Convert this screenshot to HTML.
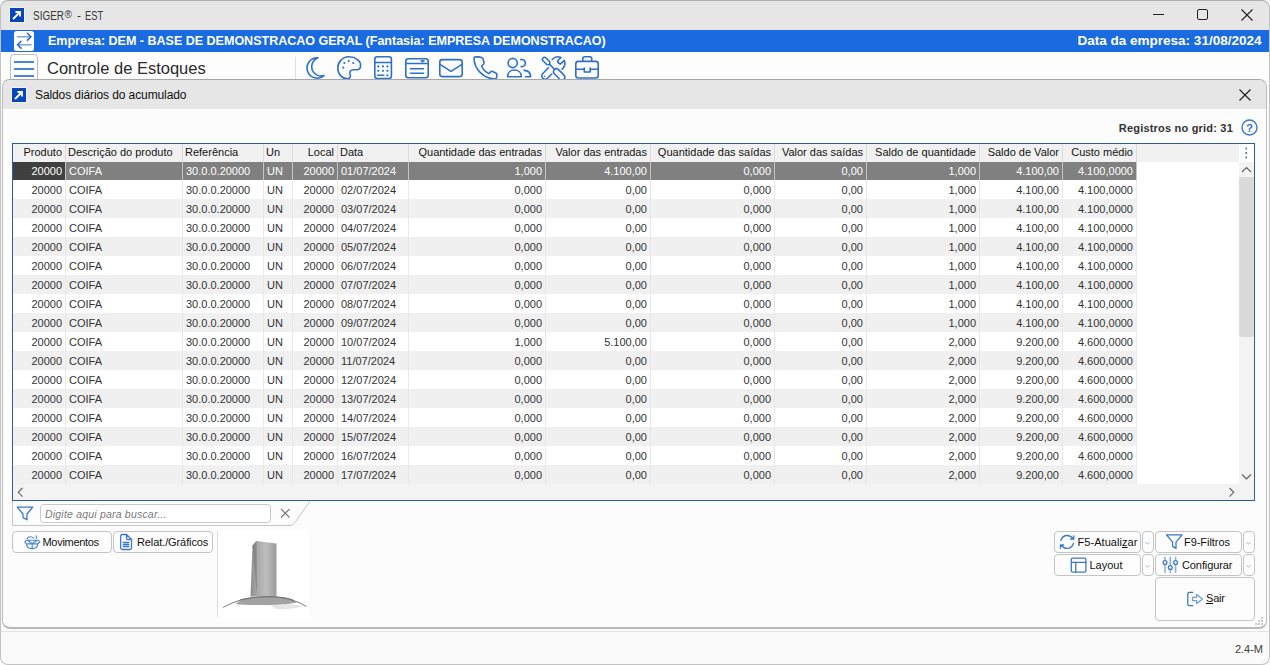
<!DOCTYPE html>
<html><head><meta charset="utf-8">
<style>
*{box-sizing:border-box;margin:0;padding:0}
html,body{width:1270px;height:665px;overflow:hidden;background:#fafafa;font-family:"Liberation Sans",sans-serif;color:#1a1a1a}
.a{position:absolute}
#win{position:absolute;left:0;top:0;width:1270px;height:665px;border-radius:8px;background:#fbfbfb;overflow:hidden}
#frame{position:absolute;left:0;top:0;width:1270px;height:665px;border:1px solid #c2c2c2;border-top-color:#b0b0b0;border-radius:8px;z-index:50}
#title{position:absolute;left:0;top:0;width:1270px;height:30px;background:#e6e6e6}
#band{position:absolute;left:1px;top:30px;width:1268px;height:22px;background:#1a6be0;color:#fff;font-weight:bold;font-size:12px}
#tool{position:absolute;left:1px;top:52px;width:1268px;height:27px;background:#fdfdfd}
#mdi{position:absolute;left:2px;top:79px;width:1265px;height:550px;border:1px solid #bdbdbd;border-top-color:#a6a6a6;border-bottom:2px solid #b8b8b8;border-radius:8px;background:#fcfcfc;overflow:hidden}
#mdititle{position:absolute;left:0;top:0;width:100%;height:29px;background:#e6e6e6}
#status{position:absolute;left:1px;top:631px;width:1268px;height:34px;border-top:1px solid #e4e4e4;background:#fafafa}
.ico{stroke:#2f6fcc;fill:none;stroke-width:1.6;stroke-linecap:round;stroke-linejoin:round}
#grid{position:absolute;left:9px;top:63px;width:1243px;height:358px;border:1px solid #2c5b9e;background:#fff;overflow:hidden;font-size:11px}
.hdr{position:absolute;left:0;top:0;width:1226px;height:18px;background:#f1f1f1;line-height:17px;color:#111}
.row{position:absolute;left:0;width:1124px;background:#fff;color:#333}
.row.alt .c{background:#f0f0f0}
.c{position:absolute;top:0;height:100%;white-space:nowrap;overflow:hidden;border-right:1px solid #e8e8e8}
.hdr .c{border-right:1px solid #dcdcdc}
.c.r{text-align:right;padding-right:3px}
.c.l{text-align:left;padding-left:2px}
.row .c.l{padding-left:3px}
.row.sel .c{background:#808080;color:#fff;border-right-color:#c4c4c4}
.row.p1 .c{padding-top:1px}
.row.sel .c.first{background:#404040}
.btn{position:absolute;border:1px solid #c4c4c4;border-radius:4px;background:#fdfdfd;font-size:12px;color:#1a1a1a}
</style></head><body>
<div id="win">
  <div id="title">
    <svg class="a" style="left:9px;top:7px" width="16" height="16" viewBox="0 0 16 16">
      <rect x="0.5" y="0.5" width="15" height="15" fill="#fff"/>
      <rect x="1" y="1" width="14" height="14" fill="#0b46b8"/>
      <path d="M4 12 L11 5 M6.5 5 H11 V9.5" stroke="#fff" stroke-width="1.8" fill="none"/>
    </svg>
    <div class="a" style="left:33px;top:8px;font-size:12px;line-height:16px;color:#3a3a3a;white-space:nowrap">
      <span class="a" style="left:0;top:0;transform:scaleX(0.83);transform-origin:0 0">SIGER</span>
      <span class="a" style="left:31.5px;top:-1px;font-size:10px">®</span>
      <span class="a" style="left:44px;top:0">-</span>
      <span class="a" style="left:52px;top:0;transform:scaleX(0.78);transform-origin:0 0">EST</span></div>
    <div class="a" style="left:1153px;top:14px;width:11px;height:1px;background:#222"></div>
    <div class="a" style="left:1197px;top:9px;width:11px;height:11px;border:1px solid #222;border-radius:2px"></div>
    <svg class="a" style="left:1241px;top:9px" width="12" height="12" viewBox="0 0 12 12"><path d="M0.5 0.5 L11.5 11.5 M11.5 0.5 L0.5 11.5" stroke="#222" stroke-width="1.1"/></svg>
  </div>
  <div id="band">
    <svg class="a" style="left:12px;top:1px" width="22" height="21" viewBox="0 0 22 21">
      <rect x="1" y="0" width="20" height="20" rx="2.5" fill="#fff"/><g transform="translate(0.5,-0.3)">
      <path d="M4 6 H17 M4 14 H17.5" stroke="#7da6e3" stroke-width="1.6" fill="none" stroke-linecap="round"/>
      <path d="M14 2.6 L17.4 6 L14 9.4 M7.5 10.6 L4.1 14 L7.5 17.4" stroke="#2f68c8" stroke-width="1.6" fill="none" stroke-linecap="round" stroke-linejoin="round"/></g>
    </svg>
    <div class="a" style="left:46.5px;top:0;line-height:22px;white-space:nowrap;transform:scaleX(1.043);transform-origin:0 0">Empresa: DEM - BASE DE DEMONSTRACAO GERAL (Fantasia: EMPRESA DEMONSTRACAO)</div>
    <div class="a" style="right:8px;top:0;line-height:22px;white-space:nowrap;transform:scaleX(1.125);transform-origin:100% 0">Data da empresa: 31/08/2024</div>
  </div>
  <div id="tool">
    <div class="a" style="left:9px;top:2px;width:28px;height:30px;border:1px solid #bcbcbc;border-radius:4px;background:#fff"></div>
    <div class="a" style="left:13px;top:9px;width:20px;height:2px;background:#4a86d8"></div>
    <div class="a" style="left:13px;top:16px;width:20px;height:2px;background:#4a86d8"></div>
    <div class="a" style="left:13px;top:23px;width:20px;height:2px;background:#4a86d8"></div>
    <div class="a" style="left:46px;top:5px;font-size:16.5px;line-height:22px;color:#2a2a2a;white-space:nowrap">Controle de Estoques</div>
    <div class="a" style="left:294px;top:5px;width:1px;height:23px;background:#e0e0e0"></div>
    <svg class="a" style="left:-1px;top:-52px;overflow:visible" width="1270" height="80" viewBox="0 0 1270 80">
<g class="ico">
<path d="M318 57.8 A10.2 10.2 0 1 0 324 75.6 A8.6 8.6 0 0 1 318 57.8 Z"/>
<path d="M349 56.8 C342 56.8 337.8 62.5 337.8 68 C337.8 74.5 342.5 78.8 347.5 78.8 C350.5 78.8 350.8 76 350 74 C349.2 71.8 350.8 69.8 353.5 69.8 L356.5 69.8 C359 69.8 360.6 68 360.6 65.5 C360.6 60.5 355.5 56.8 349 56.8 Z"/>
<rect x="374.8" y="56.8" width="16.6" height="21.8" rx="2.5"/>
<path d="M375 62.5 H391.2 M377.6 75.3 H383.8"/>
<rect x="405.8" y="58.8" width="22.4" height="19" rx="2.5"/>
<path d="M406 63.5 H428 M410.5 68.8 H423.5 M410.5 73.3 H423.5 M421.3 60.6 L422.6 61.6 L423.9 60.6"/>
<rect x="439.8" y="59.6" width="22.4" height="17" rx="2.5"/>
<path d="M440 64.3 L451 71.3 L462 64.3"/>
<path d="M478.6 56.9 L481.5 57.5 C482.3 57.7 482.8 58.3 483 59 L484 62.5 C484.2 63.3 483.9 64 483.3 64.5 L481.6 66 C483 69.5 485.5 72 488.8 73.6 L490.5 72 C491.1 71.4 491.9 71.3 492.6 71.6 L495.8 72.9 C496.5 73.2 497 73.9 496.9 74.7 L496.6 77.4 C496.5 78.3 495.7 79 494.8 79 C483.5 78.5 474.5 69.5 474 58.5 C474 57.5 474.8 56.8 475.8 56.8 Z"/>
<circle cx="512.7" cy="63" r="4.6"/>
<path d="M520.8 59.6 A3.6 3.6 0 1 1 521.2 66.6"/>
<path d="M507.6 76.7 C507.6 72.5 510.5 70 514.4 70 C518.3 70 521.4 72.5 521.4 76.7 Z"/>
<path d="M524 70.4 C528 70.6 530.6 72.8 530.6 76.7 H525.5"/>
<path d="M542.8 58.2 C543.8 57 545 57 546 58 L549.6 61.5 L550 64.8 L546.8 64.5 L543 60.8 C542 59.8 542 59 542.8 58.2 Z"/>
<path d="M550 64.8 L553.8 68.6"/>
<path d="M548.5 67.8 L542.8 73.5 C541.5 74.8 541.5 77 542.8 78.3 C544.1 79.6 546.2 79.6 547.5 78.3 L551.8 74"/>
<path d="M552.2 59.5 C554.5 57 558 56.2 561 57.5 L557.6 60.8 C557.8 62.5 559 63.7 560.7 63.9 L564.2 60.4 C565.5 63.5 564.5 67 562 69.2"/>
<path d="M554.3 69.6 C555.5 68.4 557.3 68.4 558.5 69.6 L564 75.1 C565.2 76.3 565.2 78.1 564 79.3 C562.8 80.5 561 80.5 559.8 79.3 L554.3 73.8 C553.1 72.6 553.1 70.8 554.3 69.6 Z"/>
<rect x="575.8" y="61.4" width="22.4" height="16.6" rx="2.5"/>
<path d="M582.8 61.2 V58.5 C582.8 57.4 583.4 56.8 584.5 56.8 H590 C591.1 56.8 591.7 57.4 591.7 58.5 V61.2 M576 69.2 H584.3 M590.2 69.2 H598 M584.3 68 V72 H590.2 V68"/>
</g>
<g fill="#2f6fcc">
<circle cx="343.3" cy="67.6" r="1.1"/><circle cx="344.4" cy="63" r="1.1"/><circle cx="348.7" cy="61" r="1.1"/><circle cx="353.3" cy="63" r="1.1"/>
<circle cx="378.3" cy="66.4" r="1.1"/><circle cx="382.9" cy="66.4" r="1.1"/><circle cx="387.4" cy="66.4" r="1.1"/>
<circle cx="378.3" cy="70.8" r="1.1"/><circle cx="382.9" cy="70.8" r="1.1"/><circle cx="387.4" cy="70.8" r="1.1"/>
<circle cx="387.4" cy="75.3" r="1.1"/>
<circle cx="544.8" cy="76.2" r="0.7"/>
</g>
</svg>
  </div>
  <div id="mdi">
    <div id="mdititle">
      <svg class="a" style="left:8px;top:6.5px" width="16" height="16" viewBox="0 0 16 16">
        <rect x="0.5" y="0.5" width="15" height="15" fill="#fff"/>
        <rect x="1" y="1" width="14" height="14" fill="#0b46b8"/>
        <path d="M4 12 L11 5 M6.5 5 H11 V9.5" stroke="#fff" stroke-width="1.8" fill="none"/>
      </svg>
      <div class="a" style="left:32px;top:7px;font-size:12px;line-height:17px;color:#111;white-space:nowrap;letter-spacing:-0.1px">Saldos diários do acumulado</div>
      <svg class="a" style="left:1236px;top:9px" width="12" height="12" viewBox="0 0 12 12"><path d="M0.5 0.5 L11.5 11.5 M11.5 0.5 L0.5 11.5" stroke="#222" stroke-width="1.2"/></svg>
    </div>
    <div class="a" style="right:33px;top:40px;font-size:11px;font-weight:bold;line-height:16px;color:#333;letter-spacing:0.2px;white-space:nowrap">Registros no grid: 31</div>
    <svg class="a" style="left:1238px;top:39px" width="17" height="17" viewBox="0 0 17 17"><circle cx="8.5" cy="8.5" r="7.5" stroke="#3a78c9" stroke-width="1.4" fill="none"/><text x="8.5" y="12.8" text-anchor="middle" font-family="Liberation Sans" font-weight="bold" font-size="11.5" fill="#3a78c9">?</text></svg>

    <!-- search panel -->
    <svg class="a" style="left:-3px;top:-80px;overflow:visible" width="1270" height="665" viewBox="0 0 1270 665">
      <path d="M12.5 500 V525.5 H290 Q293 525.5 295 522.5 L310.5 500.5" fill="none" stroke="#c4c4c4" stroke-width="1"/>
      <path d="M17.3 507.2 H32.7 L27 514 V519.8 L23 517.6 V514 Z" fill="none" stroke="#3a78c9" stroke-width="1.3" stroke-linejoin="round"/>
      <rect x="40.5" y="504.5" width="230" height="18" rx="3" fill="#fff" stroke="#c8c8c8"/>
      <path d="M281 509 L289.5 517.5 M289.5 509 L281 517.5" stroke="#7a7a7a" stroke-width="1.1"/>
      <line x1="217.5" y1="531" x2="217.5" y2="617" stroke="#dcdcdc"/>
    </svg>
    <div class="a" style="left:42px;top:425.5px;font-size:10.5px;line-height:16px;font-style:italic;color:#7a7a7a;white-space:nowrap;letter-spacing:0.2px">Digite aqui para buscar...</div>
    <!-- left buttons -->
    <div class="btn" style="left:9px;top:451px;width:100px;height:22px"></div>
    <div class="btn" style="left:110px;top:451px;width:100px;height:22px"></div>
    <div class="a" style="left:39.5px;top:455px;font-size:11px;line-height:14px;color:#111;letter-spacing:-0.3px;white-space:nowrap">Movimentos</div>
    <div class="a" style="left:134px;top:455px;font-size:11px;line-height:14px;color:#111;letter-spacing:-0.1px;white-space:nowrap">Relat./Gráficos</div>
    <!-- right buttons -->
    <div class="btn" style="left:1051px;top:451px;width:87px;height:22px"></div>
    <div class="btn" style="left:1139px;top:451px;width:12px;height:22px"></div>
    <div class="btn" style="left:1051px;top:474px;width:87px;height:22px"></div>
    <div class="btn" style="left:1139px;top:474px;width:12px;height:22px"></div>
    <div class="btn" style="left:1152px;top:451px;width:87px;height:22px"></div>
    <div class="btn" style="left:1240px;top:451px;width:12px;height:22px"></div>
    <div class="btn" style="left:1152px;top:474px;width:87px;height:22px"></div>
    <div class="btn" style="left:1240px;top:474px;width:12px;height:22px"></div>
    <div class="btn" style="left:1152px;top:497px;width:100px;height:44px"></div>
    <div class="a" style="left:1074.5px;top:455px;font-size:11px;line-height:14px;color:#111;white-space:nowrap;letter-spacing:0.05px">F5-Atuali<u>z</u>ar</div>
    <div class="a" style="left:1086.5px;top:478px;font-size:11px;line-height:14px;color:#111;white-space:nowrap">Layout</div>
    <div class="a" style="left:1181px;top:455px;font-size:11px;line-height:14px;color:#111;white-space:nowrap;letter-spacing:-0.05px">F9-Filtros</div>
    <div class="a" style="left:1179px;top:478px;font-size:11px;line-height:14px;color:#111;white-space:nowrap;letter-spacing:-0.1px">Configurar</div>
    <div class="a" style="left:1203px;top:511px;font-size:11px;line-height:14px;color:#111;white-space:nowrap;letter-spacing:-0.2px"><u>S</u>air</div>
    <svg class="a" style="left:-3px;top:-80px;overflow:visible" width="1270" height="665" viewBox="0 0 1270 665">
      <g fill="none" stroke="#3a78c9" stroke-width="1.3" stroke-linecap="round" stroke-linejoin="round">
        <!-- movimentos box -->
        <path stroke="#4a86d8" stroke-width="1.15" d="M24.8 542 L26.5 540.2 H38 L39.8 542 L38 543.8 H26.5 Z M27.5 540.2 L32.2 543.8 L37 540.2 M26.5 543.8 C26.5 547 29 548.6 32.2 548.6 C35.4 548.6 37.8 547 37.8 543.8 M32.2 543.8 V548.6 M27 538.6 C28.5 536.4 31.5 536.1 33.5 538.1 M36.3 535.9 V538.2"/>
        <!-- document -->
        <path d="M120.7 536 C120.7 535 121.3 534.5 122.3 534.5 H126.5 L131.5 539.5 V548 C131.5 549 130.9 549.5 129.9 549.5 H122.3 C121.3 549.5 120.7 549 120.7 548 Z M126.5 534.5 V538.2 C126.5 539 127 539.5 127.8 539.5 H131.5 M123.4 542.5 H128.8 M123.4 544.5 H128.8 M123.4 546.5 H128.8"/>
        <!-- refresh -->
        <path d="M1060.8 540.5 C1062 537.2 1064.5 535.5 1067 535.5 C1069.6 535.5 1071.8 536.8 1073.5 538.8 M1073.8 535.8 V539 H1070.6 M1073.6 543.3 C1072.4 546.6 1070 548.4 1067.2 548.4 C1064.6 548.4 1062.4 547 1060.8 545 M1060.4 548.2 V545 H1063.6"/>
        <!-- layout -->
        <rect x="1071.3" y="558.2" width="14.6" height="14" rx="1.6"/>
        <path d="M1071.5 562.3 H1085.8 M1075.8 562.3 V572"/>
        <!-- filter -->
        <path d="M1166.5 534.8 H1182 L1176 542.2 V548.4 L1172.6 546.4 V542.2 Z"/>
        <!-- configurar sliders -->
        <path d="M1165 557.3 V572.3 M1170.3 557.3 V572.3 M1175.6 557.3 V572.3" stroke="#8fb0df" stroke-width="1.6"/>
        <circle cx="1165" cy="562.5" r="1.9" fill="#fff"/>
        <circle cx="1170.3" cy="567.5" r="1.9" fill="#fff"/>
        <circle cx="1175.6" cy="562.5" r="1.9" fill="#fff"/>
        <!-- sair -->
        <path d="M1192.8 592.3 H1189.2 C1188.4 592.3 1187.8 592.9 1187.8 593.7 V604.3 C1187.8 605.1 1188.4 605.7 1189.2 605.7 H1192.8"/>
        <path d="M1192.5 597.3 H1196.6 V594.4 L1202.5 599 L1196.6 603.6 V600.7 H1192.5 Z" stroke="#6f9be0"/>
      </g>
      <g fill="none" stroke="#9fb4d4" stroke-width="1">
        <path d="M1145.5 542.5 L1147.5 544 L1149.5 542.5 M1145.5 565.5 L1147.5 567 L1149.5 565.5 M1246.5 542.5 L1248.5 544 L1250.5 542.5 M1246.5 565.5 L1248.5 567 L1250.5 565.5"/>
      </g>
      <g fill="#c8c8c8">
        <rect x="1261" y="617" width="2" height="2"/><rect x="1258" y="620" width="2" height="2"/><rect x="1261" y="620" width="2" height="2"/>
        <rect x="1255" y="623" width="2" height="2"/><rect x="1258" y="623" width="2" height="2"/><rect x="1261" y="623" width="2" height="2"/>
      </g>
    </svg>
    <!-- coifa image -->
    <svg class="a" style="left:215px;top:450px" width="91" height="89" viewBox="218 530 91 89">
      <rect x="218" y="530" width="91" height="89" fill="#fff"/>
      <defs>
        <linearGradient id="ch" x1="0" x2="1" y1="0" y2="0"><stop offset="0" stop-color="#8c8c8c"/><stop offset="0.25" stop-color="#a8a8a8"/><stop offset="0.6" stop-color="#bdbdbd"/><stop offset="1" stop-color="#9a9a9a"/></linearGradient>
      </defs>
      <path d="M250.5 596.5 L252.5 545.5 L256.5 541 L276.5 543.5 L276.5 596.5 Z" fill="url(#ch)"/>
      <path d="M252.5 545.5 L256.5 541 L257 596" fill="#7d7d7d" opacity="0.7"/>
      <path d="M270 605 C282 604 295 604 304 606 C296 609 282 609.5 276 609 Z" fill="#e6e6e6"/>
      <path d="M235.5 604 C240 599.5 250 597.3 263 596.8 C280 596.5 292 598.8 296.5 602.5 C290 605 250 606 235.5 604 Z" fill="#a2a2a2"/>
      <path d="M240 600 C250 597.5 262 596.8 270 596.8 C282 596.8 290 598.5 294 600.5" fill="none" stroke="#7c7c7c" stroke-width="1"/>
      <path d="M223 607.5 C236 600 250 597 265 596.6 C282 596.4 296 600 306.5 606.5" fill="none" stroke="#6e6e6e" stroke-width="0.9"/>
    </svg>
    <div id="grid">
<div class="hdr">
<div class="c h r" style="left:0px;width:53px">Produto</div>
<div class="c h l" style="left:53px;width:117px">Descrição do produto</div>
<div class="c h l" style="left:170px;width:81px">Referência</div>
<div class="c h l" style="left:251px;width:29px">Un</div>
<div class="c h r" style="left:280px;width:45px">Local</div>
<div class="c h l" style="left:325px;width:71px">Data</div>
<div class="c h r" style="left:396px;width:137px">Quantidade das entradas</div>
<div class="c h r" style="left:533px;width:105px">Valor das entradas</div>
<div class="c h r" style="left:638px;width:124px">Quantidade das saídas</div>
<div class="c h r" style="left:762px;width:92px">Valor das saídas</div>
<div class="c h r" style="left:854px;width:113px">Saldo de quantidade</div>
<div class="c h r" style="left:967px;width:83px">Saldo de Valor</div>
<div class="c h r" style="left:1050px;width:74px">Custo médio</div>
</div>
<div class="row sel" style="top:18px;height:18px;line-height:18px">
<div class="c first r" style="left:0px;width:53px">20000</div>
<div class="c  l" style="left:53px;width:117px">COIFA</div>
<div class="c  l" style="left:170px;width:81px">30.0.0.20000</div>
<div class="c  l" style="left:251px;width:29px">UN</div>
<div class="c  r" style="left:280px;width:45px">20000</div>
<div class="c  l" style="left:325px;width:71px">01/07/2024</div>
<div class="c  r" style="left:396px;width:137px">1,000</div>
<div class="c  r" style="left:533px;width:105px">4.100,00</div>
<div class="c  r" style="left:638px;width:124px">0,000</div>
<div class="c  r" style="left:762px;width:92px">0,00</div>
<div class="c  r" style="left:854px;width:113px">1,000</div>
<div class="c  r" style="left:967px;width:83px">4.100,00</div>
<div class="c  r" style="left:1050px;width:74px">4.100,0000</div>
</div>
<div class="row p1" style="top:36px;height:19px;line-height:19px">
<div class="c first r" style="left:0px;width:53px">20000</div>
<div class="c  l" style="left:53px;width:117px">COIFA</div>
<div class="c  l" style="left:170px;width:81px">30.0.0.20000</div>
<div class="c  l" style="left:251px;width:29px">UN</div>
<div class="c  r" style="left:280px;width:45px">20000</div>
<div class="c  l" style="left:325px;width:71px">02/07/2024</div>
<div class="c  r" style="left:396px;width:137px">0,000</div>
<div class="c  r" style="left:533px;width:105px">0,00</div>
<div class="c  r" style="left:638px;width:124px">0,000</div>
<div class="c  r" style="left:762px;width:92px">0,00</div>
<div class="c  r" style="left:854px;width:113px">1,000</div>
<div class="c  r" style="left:967px;width:83px">4.100,00</div>
<div class="c  r" style="left:1050px;width:74px">4.100,0000</div>
</div>
<div class="row p1 alt" style="top:55px;height:19px;line-height:19px">
<div class="c first r" style="left:0px;width:53px">20000</div>
<div class="c  l" style="left:53px;width:117px">COIFA</div>
<div class="c  l" style="left:170px;width:81px">30.0.0.20000</div>
<div class="c  l" style="left:251px;width:29px">UN</div>
<div class="c  r" style="left:280px;width:45px">20000</div>
<div class="c  l" style="left:325px;width:71px">03/07/2024</div>
<div class="c  r" style="left:396px;width:137px">0,000</div>
<div class="c  r" style="left:533px;width:105px">0,00</div>
<div class="c  r" style="left:638px;width:124px">0,000</div>
<div class="c  r" style="left:762px;width:92px">0,00</div>
<div class="c  r" style="left:854px;width:113px">1,000</div>
<div class="c  r" style="left:967px;width:83px">4.100,00</div>
<div class="c  r" style="left:1050px;width:74px">4.100,0000</div>
</div>
<div class="row p1" style="top:74px;height:19px;line-height:19px">
<div class="c first r" style="left:0px;width:53px">20000</div>
<div class="c  l" style="left:53px;width:117px">COIFA</div>
<div class="c  l" style="left:170px;width:81px">30.0.0.20000</div>
<div class="c  l" style="left:251px;width:29px">UN</div>
<div class="c  r" style="left:280px;width:45px">20000</div>
<div class="c  l" style="left:325px;width:71px">04/07/2024</div>
<div class="c  r" style="left:396px;width:137px">0,000</div>
<div class="c  r" style="left:533px;width:105px">0,00</div>
<div class="c  r" style="left:638px;width:124px">0,000</div>
<div class="c  r" style="left:762px;width:92px">0,00</div>
<div class="c  r" style="left:854px;width:113px">1,000</div>
<div class="c  r" style="left:967px;width:83px">4.100,00</div>
<div class="c  r" style="left:1050px;width:74px">4.100,0000</div>
</div>
<div class="row p1 alt" style="top:93px;height:19px;line-height:19px">
<div class="c first r" style="left:0px;width:53px">20000</div>
<div class="c  l" style="left:53px;width:117px">COIFA</div>
<div class="c  l" style="left:170px;width:81px">30.0.0.20000</div>
<div class="c  l" style="left:251px;width:29px">UN</div>
<div class="c  r" style="left:280px;width:45px">20000</div>
<div class="c  l" style="left:325px;width:71px">05/07/2024</div>
<div class="c  r" style="left:396px;width:137px">0,000</div>
<div class="c  r" style="left:533px;width:105px">0,00</div>
<div class="c  r" style="left:638px;width:124px">0,000</div>
<div class="c  r" style="left:762px;width:92px">0,00</div>
<div class="c  r" style="left:854px;width:113px">1,000</div>
<div class="c  r" style="left:967px;width:83px">4.100,00</div>
<div class="c  r" style="left:1050px;width:74px">4.100,0000</div>
</div>
<div class="row p1" style="top:112px;height:19px;line-height:19px">
<div class="c first r" style="left:0px;width:53px">20000</div>
<div class="c  l" style="left:53px;width:117px">COIFA</div>
<div class="c  l" style="left:170px;width:81px">30.0.0.20000</div>
<div class="c  l" style="left:251px;width:29px">UN</div>
<div class="c  r" style="left:280px;width:45px">20000</div>
<div class="c  l" style="left:325px;width:71px">06/07/2024</div>
<div class="c  r" style="left:396px;width:137px">0,000</div>
<div class="c  r" style="left:533px;width:105px">0,00</div>
<div class="c  r" style="left:638px;width:124px">0,000</div>
<div class="c  r" style="left:762px;width:92px">0,00</div>
<div class="c  r" style="left:854px;width:113px">1,000</div>
<div class="c  r" style="left:967px;width:83px">4.100,00</div>
<div class="c  r" style="left:1050px;width:74px">4.100,0000</div>
</div>
<div class="row p1 alt" style="top:131px;height:19px;line-height:19px">
<div class="c first r" style="left:0px;width:53px">20000</div>
<div class="c  l" style="left:53px;width:117px">COIFA</div>
<div class="c  l" style="left:170px;width:81px">30.0.0.20000</div>
<div class="c  l" style="left:251px;width:29px">UN</div>
<div class="c  r" style="left:280px;width:45px">20000</div>
<div class="c  l" style="left:325px;width:71px">07/07/2024</div>
<div class="c  r" style="left:396px;width:137px">0,000</div>
<div class="c  r" style="left:533px;width:105px">0,00</div>
<div class="c  r" style="left:638px;width:124px">0,000</div>
<div class="c  r" style="left:762px;width:92px">0,00</div>
<div class="c  r" style="left:854px;width:113px">1,000</div>
<div class="c  r" style="left:967px;width:83px">4.100,00</div>
<div class="c  r" style="left:1050px;width:74px">4.100,0000</div>
</div>
<div class="row p1" style="top:150px;height:19px;line-height:19px">
<div class="c first r" style="left:0px;width:53px">20000</div>
<div class="c  l" style="left:53px;width:117px">COIFA</div>
<div class="c  l" style="left:170px;width:81px">30.0.0.20000</div>
<div class="c  l" style="left:251px;width:29px">UN</div>
<div class="c  r" style="left:280px;width:45px">20000</div>
<div class="c  l" style="left:325px;width:71px">08/07/2024</div>
<div class="c  r" style="left:396px;width:137px">0,000</div>
<div class="c  r" style="left:533px;width:105px">0,00</div>
<div class="c  r" style="left:638px;width:124px">0,000</div>
<div class="c  r" style="left:762px;width:92px">0,00</div>
<div class="c  r" style="left:854px;width:113px">1,000</div>
<div class="c  r" style="left:967px;width:83px">4.100,00</div>
<div class="c  r" style="left:1050px;width:74px">4.100,0000</div>
</div>
<div class="row p1 alt" style="top:169px;height:19px;line-height:19px">
<div class="c first r" style="left:0px;width:53px">20000</div>
<div class="c  l" style="left:53px;width:117px">COIFA</div>
<div class="c  l" style="left:170px;width:81px">30.0.0.20000</div>
<div class="c  l" style="left:251px;width:29px">UN</div>
<div class="c  r" style="left:280px;width:45px">20000</div>
<div class="c  l" style="left:325px;width:71px">09/07/2024</div>
<div class="c  r" style="left:396px;width:137px">0,000</div>
<div class="c  r" style="left:533px;width:105px">0,00</div>
<div class="c  r" style="left:638px;width:124px">0,000</div>
<div class="c  r" style="left:762px;width:92px">0,00</div>
<div class="c  r" style="left:854px;width:113px">1,000</div>
<div class="c  r" style="left:967px;width:83px">4.100,00</div>
<div class="c  r" style="left:1050px;width:74px">4.100,0000</div>
</div>
<div class="row p1" style="top:188px;height:19px;line-height:19px">
<div class="c first r" style="left:0px;width:53px">20000</div>
<div class="c  l" style="left:53px;width:117px">COIFA</div>
<div class="c  l" style="left:170px;width:81px">30.0.0.20000</div>
<div class="c  l" style="left:251px;width:29px">UN</div>
<div class="c  r" style="left:280px;width:45px">20000</div>
<div class="c  l" style="left:325px;width:71px">10/07/2024</div>
<div class="c  r" style="left:396px;width:137px">1,000</div>
<div class="c  r" style="left:533px;width:105px">5.100,00</div>
<div class="c  r" style="left:638px;width:124px">0,000</div>
<div class="c  r" style="left:762px;width:92px">0,00</div>
<div class="c  r" style="left:854px;width:113px">2,000</div>
<div class="c  r" style="left:967px;width:83px">9.200,00</div>
<div class="c  r" style="left:1050px;width:74px">4.600,0000</div>
</div>
<div class="row p1 alt" style="top:207px;height:19px;line-height:19px">
<div class="c first r" style="left:0px;width:53px">20000</div>
<div class="c  l" style="left:53px;width:117px">COIFA</div>
<div class="c  l" style="left:170px;width:81px">30.0.0.20000</div>
<div class="c  l" style="left:251px;width:29px">UN</div>
<div class="c  r" style="left:280px;width:45px">20000</div>
<div class="c  l" style="left:325px;width:71px">11/07/2024</div>
<div class="c  r" style="left:396px;width:137px">0,000</div>
<div class="c  r" style="left:533px;width:105px">0,00</div>
<div class="c  r" style="left:638px;width:124px">0,000</div>
<div class="c  r" style="left:762px;width:92px">0,00</div>
<div class="c  r" style="left:854px;width:113px">2,000</div>
<div class="c  r" style="left:967px;width:83px">9.200,00</div>
<div class="c  r" style="left:1050px;width:74px">4.600,0000</div>
</div>
<div class="row p1" style="top:226px;height:19px;line-height:19px">
<div class="c first r" style="left:0px;width:53px">20000</div>
<div class="c  l" style="left:53px;width:117px">COIFA</div>
<div class="c  l" style="left:170px;width:81px">30.0.0.20000</div>
<div class="c  l" style="left:251px;width:29px">UN</div>
<div class="c  r" style="left:280px;width:45px">20000</div>
<div class="c  l" style="left:325px;width:71px">12/07/2024</div>
<div class="c  r" style="left:396px;width:137px">0,000</div>
<div class="c  r" style="left:533px;width:105px">0,00</div>
<div class="c  r" style="left:638px;width:124px">0,000</div>
<div class="c  r" style="left:762px;width:92px">0,00</div>
<div class="c  r" style="left:854px;width:113px">2,000</div>
<div class="c  r" style="left:967px;width:83px">9.200,00</div>
<div class="c  r" style="left:1050px;width:74px">4.600,0000</div>
</div>
<div class="row p1 alt" style="top:245px;height:19px;line-height:19px">
<div class="c first r" style="left:0px;width:53px">20000</div>
<div class="c  l" style="left:53px;width:117px">COIFA</div>
<div class="c  l" style="left:170px;width:81px">30.0.0.20000</div>
<div class="c  l" style="left:251px;width:29px">UN</div>
<div class="c  r" style="left:280px;width:45px">20000</div>
<div class="c  l" style="left:325px;width:71px">13/07/2024</div>
<div class="c  r" style="left:396px;width:137px">0,000</div>
<div class="c  r" style="left:533px;width:105px">0,00</div>
<div class="c  r" style="left:638px;width:124px">0,000</div>
<div class="c  r" style="left:762px;width:92px">0,00</div>
<div class="c  r" style="left:854px;width:113px">2,000</div>
<div class="c  r" style="left:967px;width:83px">9.200,00</div>
<div class="c  r" style="left:1050px;width:74px">4.600,0000</div>
</div>
<div class="row p1" style="top:264px;height:19px;line-height:19px">
<div class="c first r" style="left:0px;width:53px">20000</div>
<div class="c  l" style="left:53px;width:117px">COIFA</div>
<div class="c  l" style="left:170px;width:81px">30.0.0.20000</div>
<div class="c  l" style="left:251px;width:29px">UN</div>
<div class="c  r" style="left:280px;width:45px">20000</div>
<div class="c  l" style="left:325px;width:71px">14/07/2024</div>
<div class="c  r" style="left:396px;width:137px">0,000</div>
<div class="c  r" style="left:533px;width:105px">0,00</div>
<div class="c  r" style="left:638px;width:124px">0,000</div>
<div class="c  r" style="left:762px;width:92px">0,00</div>
<div class="c  r" style="left:854px;width:113px">2,000</div>
<div class="c  r" style="left:967px;width:83px">9.200,00</div>
<div class="c  r" style="left:1050px;width:74px">4.600,0000</div>
</div>
<div class="row p1 alt" style="top:283px;height:19px;line-height:19px">
<div class="c first r" style="left:0px;width:53px">20000</div>
<div class="c  l" style="left:53px;width:117px">COIFA</div>
<div class="c  l" style="left:170px;width:81px">30.0.0.20000</div>
<div class="c  l" style="left:251px;width:29px">UN</div>
<div class="c  r" style="left:280px;width:45px">20000</div>
<div class="c  l" style="left:325px;width:71px">15/07/2024</div>
<div class="c  r" style="left:396px;width:137px">0,000</div>
<div class="c  r" style="left:533px;width:105px">0,00</div>
<div class="c  r" style="left:638px;width:124px">0,000</div>
<div class="c  r" style="left:762px;width:92px">0,00</div>
<div class="c  r" style="left:854px;width:113px">2,000</div>
<div class="c  r" style="left:967px;width:83px">9.200,00</div>
<div class="c  r" style="left:1050px;width:74px">4.600,0000</div>
</div>
<div class="row p1" style="top:302px;height:19px;line-height:19px">
<div class="c first r" style="left:0px;width:53px">20000</div>
<div class="c  l" style="left:53px;width:117px">COIFA</div>
<div class="c  l" style="left:170px;width:81px">30.0.0.20000</div>
<div class="c  l" style="left:251px;width:29px">UN</div>
<div class="c  r" style="left:280px;width:45px">20000</div>
<div class="c  l" style="left:325px;width:71px">16/07/2024</div>
<div class="c  r" style="left:396px;width:137px">0,000</div>
<div class="c  r" style="left:533px;width:105px">0,00</div>
<div class="c  r" style="left:638px;width:124px">0,000</div>
<div class="c  r" style="left:762px;width:92px">0,00</div>
<div class="c  r" style="left:854px;width:113px">2,000</div>
<div class="c  r" style="left:967px;width:83px">9.200,00</div>
<div class="c  r" style="left:1050px;width:74px">4.600,0000</div>
</div>
<div class="row p1 alt" style="top:321px;height:19px;line-height:19px">
<div class="c first r" style="left:0px;width:53px">20000</div>
<div class="c  l" style="left:53px;width:117px">COIFA</div>
<div class="c  l" style="left:170px;width:81px">30.0.0.20000</div>
<div class="c  l" style="left:251px;width:29px">UN</div>
<div class="c  r" style="left:280px;width:45px">20000</div>
<div class="c  l" style="left:325px;width:71px">17/07/2024</div>
<div class="c  r" style="left:396px;width:137px">0,000</div>
<div class="c  r" style="left:533px;width:105px">0,00</div>
<div class="c  r" style="left:638px;width:124px">0,000</div>
<div class="c  r" style="left:762px;width:92px">0,00</div>
<div class="c  r" style="left:854px;width:113px">2,000</div>
<div class="c  r" style="left:967px;width:83px">9.200,00</div>
<div class="c  r" style="left:1050px;width:74px">4.600,0000</div>
</div>
<div class="a" style="left:1226px;top:0;width:15px;height:18px;background:#fff"></div>
<div class="a" style="left:1226px;top:18px;width:15px;height:338px;background:#f3f3f3"></div>
<div class="a" style="left:1226px;top:33px;width:15px;height:160px;background:#dadada;border-radius:0 0 3px 3px"></div>
<div class="a" style="left:0;top:340px;width:1226px;height:16px;background:#f3f3f3"></div>
<svg class="a" style="left:-13px;top:-144px;overflow:visible" width="1270" height="665" viewBox="0 0 1270 665">
  <g fill="#3a78c9"><rect x="1245.5" y="147.5" width="1.5" height="2"/><rect x="1245.5" y="152" width="1.5" height="2"/><rect x="1245.5" y="156.5" width="1.5" height="2"/></g>
  <g fill="none" stroke="#606060" stroke-width="1.1">
    <path d="M1242 172 L1246.5 167.5 L1251 172"/>
    <path d="M1242 474.5 L1246.5 479 L1251 474.5"/>
    <path d="M22.5 488 L18.3 492.3 L22.5 496.6"/>
    <path d="M1229.5 488 L1233.7 492.3 L1229.5 496.6"/>
  </g>
</svg>

    </div>
  </div>
  <div id="status">
    <div class="a" style="right:6px;top:9px;font-size:11px;line-height:16px;color:#404040">2.4-M</div>
  </div>
</div>
<div id="frame"></div>
</body></html>
